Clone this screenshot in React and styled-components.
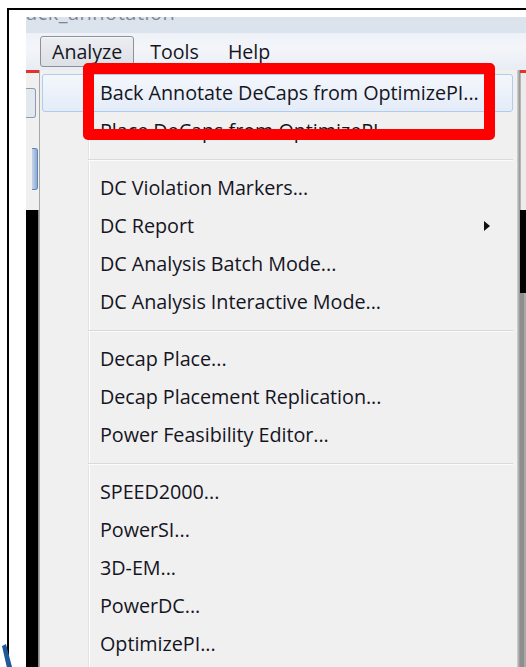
import React from 'react';
import styled, { createGlobalStyle } from 'styled-components';

const GlobalStyle = createGlobalStyle`
  html, body {
    margin: 0;
    padding: 0;
    background: #fff;
  }
  body {
    width: 526px;
    height: 667px;
    overflow: hidden;
    font-family: "Open Sans", "Noto Sans", sans-serif;
  }
`;

const Page = styled.div`
  position: relative;
  width: 526px;
  height: 667px;
  overflow: hidden;
  background: #fff;
  padding: 8px 0 0 7px;
  box-sizing: border-box;
`;

const Frame = styled.div`
  height: 100%;
  border-left: 2px solid #000;
  border-top: 2px solid #000;
  padding: 7px 0 0 17px;
  box-sizing: border-box;
  display: flex;
  flex-direction: column;
  overflow: hidden;
`;

const TitleStrip = styled.div`
  height: 16px;
  flex-shrink: 0;
  background: #dbe3ed;
  overflow: hidden;
  color: #7d8793;
  font-size: 20px;
  line-height: 20px;
  span {
    display: block;
    margin-top: -14px;
    letter-spacing: 0.5px;
  }
`;

const MenuBar = styled.div`
  height: 37px;
  flex-shrink: 0;
  display: flex;
  align-items: center;
  gap: 3px;
  padding-left: 14px;
  background: linear-gradient(#eef2f8 0%, #f3f5f9 45%, #e8ecf3 100%);
`;

const MenuLabel = styled.div`
  height: 31px;
  display: flex;
  align-items: center;
  padding: 0 ${(p) => (p.open ? 11 : 12)}px;
  box-sizing: border-box;
  font-size: 19.6px;
  color: #15151f;
  border-radius: 3px;
  border: 1px solid ${(p) => (p.open ? '#8c9097' : 'transparent')};
  background: ${(p) => (p.open ? 'linear-gradient(#eceef1, #dcdfe4)' : 'none')};
  box-shadow: ${(p) => (p.open ? 'inset 0 1px 0 #f8f9fb' : 'none')};
`;

const Body = styled.div`
  flex: 1;
  display: flex;
  min-height: 0;
`;

const LeftStrip = styled.div`
  width: 13px;
  flex-shrink: 0;
  display: flex;
  flex-direction: column;
  background: #f0f0f0;
`;

const RedLine = styled.div`
  height: 3px;
  background: #e5312b;
`;

const Stub = styled.div`
  flex-shrink: 0;
  height: ${(p) => p.h}px;
  width: ${(p) => p.w}px;
  margin-top: ${(p) => p.top}px;
  margin-left: ${(p) => p.left || 0}px;
  box-sizing: border-box;
  border: 1px solid ${(p) => (p.blue ? '#5f84b8' : '#8d9bb0')};
  border-left: none;
  border-radius: 0 3px 3px 0;
  background: ${(p) => (p.blue ? 'linear-gradient(to right, #c7d6ea, #8eaad4)' : '#e3e8ef')};
`;

const BlackPanel = styled.div`
  flex: 1;
  margin-top: 20px;
  background: #000;
  border-right: 1px solid #8a8a8a;
`;

const Menu = styled.div`
  width: 478px;
  flex-shrink: 0;
  box-sizing: border-box;
  border-left: 1px solid #a7a7a7;
  padding: 4px 4px 0 2px;
  background: linear-gradient(
    to right,
    #f0f0f0 48px,
    #e2e3e3 48px,
    #e2e3e3 49px,
    #ffffff 49px,
    #ffffff 50px,
    #f0f0f0 50px
  );
  display: flex;
  flex-direction: column;
`;

const Item = styled.div`
  height: 38px;
  flex-shrink: 0;
  box-sizing: border-box;
  display: flex;
  align-items: center;
  padding: 0 22px 1px 57px;
  border-radius: 3px;
  border: 1px solid ${(p) => (p.active ? '#aecbf0' : 'transparent')};
  background: ${(p) => (p.active ? 'linear-gradient(#f4f7fc, #e4ecf8)' : 'transparent')};
  font-size: 19.8px;
  letter-spacing: -0.05px;
  color: #15151f;
  white-space: nowrap;
`;

const Label = styled.span`
  flex: 1;
`;

const Arrow = styled.span`
  width: 0;
  height: 0;
  border-top: 5px solid transparent;
  border-bottom: 5px solid transparent;
  border-left: 6px solid #111;
`;

const Separator = styled.div`
  height: 19px;
  flex-shrink: 0;
  display: flex;
  align-items: center;
  padding: 0 0 0 46px;
  &::after {
    content: '';
    flex: 1;
    height: 1px;
    background: #d9d9d9;
    border-bottom: 1px solid #fbfbfb;
  }
`;

const RightStrip = styled.div`
  flex: 1;
  display: flex;
`;

const RightEdge = styled.div`
  width: 3px;
  background: linear-gradient(to right, #d6d6d6, #8f8f8f);
`;

const RightRest = styled.div`
  flex: 1;
  display: flex;
  flex-direction: column;
  background: linear-gradient(to right, #8e8e8e 60%, #a8a8a8 60%);
  .red {
    height: 3px;
    background: #e5312b;
  }
  .light {
    height: 137px;
    background: #ececec;
    border-left: 1px solid #b5b5b5;
  }
  .dark {
    height: 83px;
    background: #000;
  }
`;

// part of a logo peeking out at the lower left
const LogoMark = styled.svg`
  position: absolute;
  left: 1px;
  top: 644px;
`;

// hand-drawn callout box over the first menu entries
const Callout = styled.div`
  position: absolute;
  left: 83px;
  top: 63px;
  width: 412px;
  height: 77px;
  box-sizing: border-box;
  border: 11px solid #ff0000;
  border-radius: 5px;
  pointer-events: none;
`;

const entries = [
  { label: 'Back Annotate DeCaps from OptimizePI...', active: true },
  { label: 'Place DeCaps from OptimizePI...' },
  'sep',
  { label: 'DC Violation Markers...' },
  { label: 'DC Report', sub: true },
  { label: 'DC Analysis Batch Mode...' },
  { label: 'DC Analysis Interactive Mode...' },
  'sep',
  { label: 'Decap Place...' },
  { label: 'Decap Placement Replication...' },
  { label: 'Power Feasibility Editor...' },
  'sep',
  { label: 'SPEED2000...' },
  { label: 'PowerSI...' },
  { label: '3D-EM...' },
  { label: 'PowerDC...' },
  { label: 'OptimizePI...' },
];

function App() {
  return (
    <Page>
      <GlobalStyle />
      <Frame>
        <TitleStrip>
          <span>ack_annotation</span>
        </TitleStrip>
        <MenuBar>
          <MenuLabel open>Analyze</MenuLabel>
          <MenuLabel>Tools</MenuLabel>
          <MenuLabel>Help</MenuLabel>
        </MenuBar>
        <Body>
          <LeftStrip>
            <RedLine />
            <Stub h={30} w={10} top={15} />
            <Stub h={42} w={6} top={30} left={6} blue />
            <BlackPanel />
          </LeftStrip>
          <Menu>
            {entries.map((e, i) =>
              e === 'sep' ? (
                <Separator key={i} />
              ) : (
                <Item key={i} active={e.active}>
                  <Label>{e.label}</Label>
                  {e.sub && <Arrow />}
                </Item>
              )
            )}
          </Menu>
          <RightStrip>
            <RightEdge />
            <RightRest>
              <div className="red" />
              <div className="light" />
              <div className="dark" />
            </RightRest>
          </RightStrip>
        </Body>
      </Frame>
      <Callout />
      <LogoMark width="12" height="24" viewBox="0 0 12 24">
        <polygon points="1,2 5,0 11,23 6,24" fill="#1f5a98" />
      </LogoMark>
    </Page>
  );
}

export default App;
